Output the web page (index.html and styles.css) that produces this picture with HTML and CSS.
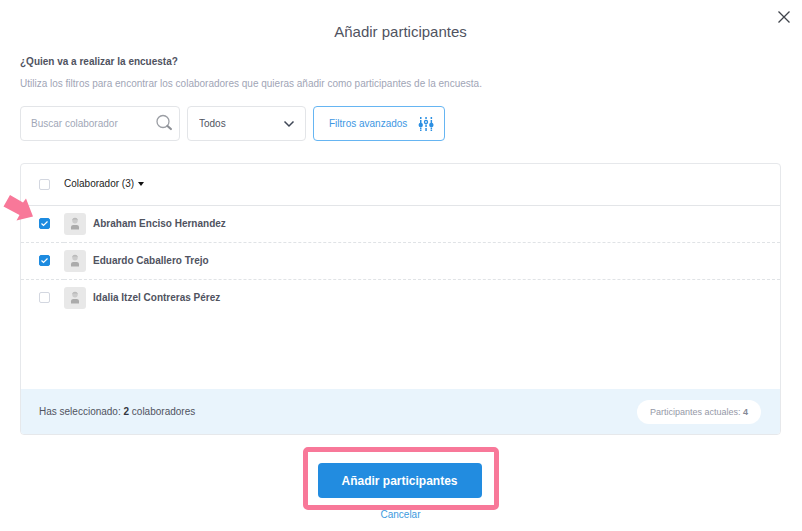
FILE: index.html
```html
<!DOCTYPE html>
<html lang="es">
<head>
<meta charset="utf-8">
<meta name="viewport" content="width=device-width, initial-scale=1">
<title>Añadir participantes</title>
<link rel="stylesheet" href="styles.css">
</head>
<body>
<svg class="symbols" width="0" height="0" aria-hidden="true">
  <symbol id="person" viewBox="0 0 22 22">
    <circle cx="11" cy="7.800" r="2.700" fill="#cbcbcb"/>
    <path d="M8.300 7.400a2.700 2.700 0 0 1 5.400 0l-1.200-.8H9.500z" fill="#bababa"/>
    <path d="M7 16.500v-2.200c0-1.500 1-2.300 2.300-2.300h3.400c1.300 0 2.300.8 2.300 2.300v2.200z" fill="#ababab"/>
  </symbol>
</svg>
<main class="dialog">
  <button class="close" type="button" aria-label="Cerrar">
    <svg width="14" height="14" viewBox="0 0 14 14"><path d="M1.500 1.500l11 11M12.500 1.500l-11 11" stroke="#3f434b" stroke-width="1.300" fill="none"/></svg>
  </button>
  <h1 class="title">Añadir participantes</h1>
  <h2 class="question">¿Quien va a realizar la encuesta?</h2>
  <p class="hint">Utiliza los filtros para encontrar los colaboradores que quieras añadir como participantes de la encuesta.</p>

  <div class="filters">
    <div class="search">
      <input type="text" placeholder="Buscar colaborador" aria-label="Buscar colaborador">
      <svg class="search-icon" width="18" height="18" viewBox="0 0 18 18"><circle cx="8" cy="7.500" r="6" fill="none" stroke="#9b9ea4" stroke-width="1.300"/><path d="M12.500 12l3.400 3" stroke="#8d9096" stroke-width="2.200" stroke-linecap="round"/></svg>
    </div>
    <div class="scope">
      <select aria-label="Mostrar"><option>Todos</option></select>
      <svg class="chevron" width="12" height="8" viewBox="0 0 12 8"><path d="M1.500 1.500L6 6l4.500-4.500" fill="none" stroke="#3f4756" stroke-width="1.500"/></svg>
    </div>
    <button class="advanced" type="button">Filtros avanzados
      <svg width="16" height="16" viewBox="0 0 16 16" fill="#2b8fe2"><path d="M2 1h1.500v2H2zM2 4h1.500v3H2zM2 11.500h1.500V13H2zM2 13.500h1.500V15H2zM7.300 1h1.500v2H7.300zM7.300 8.500h1.500V11H7.300zM7.300 12h1.500v3H7.300zM12.600 1h1.500v2h-1.500zM12.600 4h1.500v3h-1.500zM12.600 11.500h1.500V13h-1.500zM12.600 13.500h1.500V15h-1.500z"/><circle cx="2.750" cy="9" r="2.200"/><circle cx="8" cy="6" r="1.600" fill="#d4e9fa" stroke="#2b8fe2" stroke-width="1.200"/><circle cx="13.350" cy="9" r="2.200"/></svg>
    </button>
  </div>

  <section class="panel">
    <table class="people">
      <thead>
        <tr>
          <th class="pick"><input type="checkbox" aria-label="Seleccionar todos"></th>
          <th><button class="sort" type="button">Colaborador (3) <span class="caret"></span></button></th>
        </tr>
      </thead>
      <tbody>
        <tr>
          <td class="pick"><input type="checkbox" id="p1" checked>
            <svg class="pointer" width="32" height="28" viewBox="0 0 32 28" aria-hidden="true"><path d="M8 1L21 8.500L24 4.500L31 22.500L14.500 26.500L17.500 21L1.500 12.500z" fill="#f87899"/></svg>
          </td>
          <td><label class="person" for="p1"><svg class="avatar"><use href="#person"/></svg>Abraham Enciso Hernandez</label></td>
        </tr>
        <tr>
          <td class="pick"><input type="checkbox" id="p2" checked></td>
          <td><label class="person" for="p2"><svg class="avatar"><use href="#person"/></svg>Eduardo Caballero Trejo</label></td>
        </tr>
        <tr>
          <td class="pick"><input type="checkbox" id="p3"></td>
          <td><label class="person" for="p3"><svg class="avatar"><use href="#person"/></svg>Idalia Itzel Contreras Pérez</label></td>
        </tr>
      </tbody>
    </table>
    <footer class="summary">
      <span>Has seleccionado: <b>2</b> colaboradores</span>
      <span class="pill">Participantes actuales: <b>4</b></span>
    </footer>
  </section>

  <div class="actions">
    <div class="highlight"><button class="submit" type="button">Añadir participantes</button></div>
    <a class="cancel" href="#">Cancelar</a>
  </div>
</main>
</body>
</html>
```
FILE: styles.css
```css
* { box-sizing: border-box; }

body {
  margin: 0;
  background: #fff;
  color: #50535f;
  font: 10px/16px "Liberation Sans", Arial, sans-serif;
}

button, input, select { font: inherit; color: inherit; margin: 0; }
button { cursor: pointer; }
.symbols { position: absolute; }

.dialog { position: relative; padding: 20px 21px 0 20px; }

.close {
  position: absolute;
  top: 10px;
  right: 11px;
  display: flex;
  padding: 0;
  border: 0;
  background: none;
}

.title {
  margin: 0;
  font-size: 15px;
  line-height: 24px;
  font-weight: 400;
  text-align: center;
}

.question { margin: 10px 0 0; font-size: 10px; line-height: 16px; }
.hint { margin: 6px 0 0; color: #9fa5b6; }

.filters { display: flex; gap: 7px; margin-top: 14px; }

.search, .scope { position: relative; height: 35px; }
.search { width: 160px; }
.scope { width: 119px; }

.search input, .scope select {
  width: 100%;
  height: 100%;
  border: 1px solid #e3e5e8;
  border-radius: 4px;
  background: #fff;
  padding: 0 10px;
}
.search input::placeholder { color: #a1a7b7; }
.scope select { appearance: none; padding: 0 11px; }
.search-icon { position: absolute; top: 8px; right: 7px; }
.chevron { position: absolute; top: 14px; right: 11px; pointer-events: none; }

.advanced {
  display: flex;
  align-items: center;
  gap: 11px;
  height: 35px;
  padding: 0 10px 0 15px;
  border: 1px solid #66b5f2;
  border-radius: 4px;
  background: #fff;
  color: #3d97e3;
}

.panel {
  display: flex;
  flex-direction: column;
  min-height: 272px;
  margin-top: 22px;
  border: 1px solid #e6e8eb;
  border-radius: 4px;
}

.people { width: 100%; border-collapse: collapse; }
.people th, .people td { height: 37px; padding: 0; text-align: left; }
.people th { height: 41px; border-bottom: 1px solid #e3e5e8; font-weight: 400; }
.people td { border-bottom: 1px dashed #e0e3e6; }
.people tr:last-child td { border-bottom: 0; }
.people .pick { position: relative; width: 43px; padding-left: 18px; }

input[type="checkbox"] {
  appearance: none;
  display: block;
  width: 11px;
  height: 11px;
  border: 1px solid #d3d7e0;
  border-radius: 2px;
  background: #fff;
}
input[type="checkbox"]:checked {
  border-color: #1d8be0;
  background: #1d8be0 url("data:image/svg+xml,%3Csvg xmlns='http://www.w3.org/2000/svg' viewBox='0 0 9 9'%3E%3Cpath d='M1.500 4.500l2 2 4-4' fill='none' stroke='white' stroke-width='1.200'/%3E%3C/svg%3E") center / 9px 9px;
}

.pointer { position: absolute; top: -12px; left: -19px; }

.sort {
  display: flex;
  align-items: center;
  gap: 4px;
  padding: 0;
  border: 0;
  background: none;
  color: #222;
}
.caret { border: 3px solid transparent; border-top: 4px solid #111; border-bottom: 0; }

.person { display: flex; align-items: center; gap: 7px; font-weight: 700; }
.avatar { width: 22px; height: 22px; border-radius: 3px; background: #e8e8e8; }

.summary {
  display: flex;
  align-items: center;
  justify-content: space-between;
  height: 45px;
  margin-top: auto;
  padding: 0 19px 0 18px;
  border-radius: 0 0 3px 3px;
  background: #e9f4fc;
}
.summary b { color: #33363f; }
.pill {
  padding: 4px 13px;
  border-radius: 12px;
  background: #fff;
  color: #9599a7;
  font-size: 9px;
}
.pill b { color: #858996; }

.actions { display: flex; flex-direction: column; align-items: center; margin-top: 12px; }
.highlight { padding: 11px 12px 7px 10px; border: 5px solid #f87899; border-radius: 5px; }
.submit {
  display: block;
  height: 35px;
  width: 164px;
  border: 0;
  border-radius: 4px;
  background: #228ce0;
  color: #fff;
  font-size: 12px;
  font-weight: 700;
}
.cancel { margin-top: -3px; color: #3d9ade; text-decoration: none; }
```
